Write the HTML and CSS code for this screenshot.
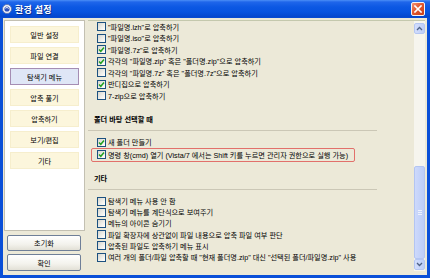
FILE: index.html
```html
<!DOCTYPE html>
<html lang="ko">
<head>
<meta charset="utf-8">
<title>환경 설정</title>
<link rel="stylesheet" href="styles.css">
</head>
<body>
<div class="window">
  <div class="titlebar">
    <span class="app-icon"><svg width="10" height="10" viewBox="0 0 10 10"><circle cx="5" cy="5" r="4.5" fill="#f4f6fb" stroke="#5a6ea8" stroke-width="0.8"/><circle cx="5" cy="5" r="2.6" fill="#2d4fb8"/><path d="M3.2 4.2 Q5 2.6 6.8 4.4" stroke="#fff" stroke-width="0.9" fill="none"/></svg></span>
    <span class="title">환경 설정</span>
    <span class="close"><svg width="8" height="8" viewBox="0 0 8 8"><path d="M1 1 L7 7 M7 1 L1 7" stroke="#fff" stroke-width="1.6" stroke-linecap="square"/></svg></span>
  </div>
  <div class="frame">
    <div class="sidebar">
      <div class="nav">
        <div class="nav-btn">일반 설정</div>
        <div class="nav-btn">파일 연결</div>
        <div class="nav-btn active">탐색기 메뉴</div>
        <div class="nav-btn">압축 풀기</div>
        <div class="nav-btn">압축하기</div>
        <div class="nav-btn">보기/편집</div>
        <div class="nav-btn">기타</div>
      </div>
      <div class="push first">초기화</div>
      <div class="push">확인</div>
    </div>
    <div class="pane">
      <div class="content">
        <div class="list first-list">
          <div class="opt"><span class="cb"></span>"파일명.lzh"로 압축하기</div>
          <div class="opt"><span class="cb"></span>"파일명.iso"로 압축하기</div>
          <div class="opt"><span class="cb on"><svg width="7" height="7" viewBox="0 0 7 7"><path d="M1 3.5 L2.8 5.3 L6 1.6" stroke="#21a121" stroke-width="1.5" fill="none"/></svg></span>"파일명.7z"로 압축하기</div>
          <div class="opt"><span class="cb on"><svg width="7" height="7" viewBox="0 0 7 7"><path d="M1 3.5 L2.8 5.3 L6 1.6" stroke="#21a121" stroke-width="1.5" fill="none"/></svg></span>각각의 "파일명.zip" 혹은 "폴더명.zip"으로 압축하기</div>
          <div class="opt"><span class="cb"></span>각각의 "파일명.7z" 혹은 "폴더명.7z"으로 압축하기</div>
          <div class="opt"><span class="cb on"><svg width="7" height="7" viewBox="0 0 7 7"><path d="M1 3.5 L2.8 5.3 L6 1.6" stroke="#21a121" stroke-width="1.5" fill="none"/></svg></span>반디집으로 압축하기</div>
          <div class="opt"><span class="cb"></span>7-zip으로 압축하기</div>
        </div>
        <div class="heading">폴더 바탕 선택할 때</div>
        <div class="sep"></div>
        <div class="list">
          <div class="opt"><span class="cb on"><svg width="7" height="7" viewBox="0 0 7 7"><path d="M1 3.5 L2.8 5.3 L6 1.6" stroke="#21a121" stroke-width="1.5" fill="none"/></svg></span>새 폴더 만들기</div>
          <div class="hl">
            <div class="opt"><span class="cb on"><svg width="7" height="7" viewBox="0 0 7 7"><path d="M1 3.5 L2.8 5.3 L6 1.6" stroke="#21a121" stroke-width="1.5" fill="none"/></svg></span>명령 창(cmd) 열기 (Vista/7 에서는 Shift 키를 누르면 관리자 권한으로 실행 가능)</div>
          </div>
        </div>
        <div class="heading second">기타</div>
        <div class="sep"></div>
        <div class="list etc">
          <div class="opt"><span class="cb"></span>탐색기 메뉴 사용 안 함</div>
          <div class="opt"><span class="cb"></span>탐색기 메뉴를 계단식으로 보여주기</div>
          <div class="opt"><span class="cb"></span>메뉴의 아이콘 숨기기</div>
          <div class="opt"><span class="cb"></span>파일 확장자에 상관없이 파일 내용으로 압축 파일 여부 판단</div>
          <div class="opt"><span class="cb"></span>압축된 파일도 압축하기 메뉴 표시</div>
          <div class="opt"><span class="cb"></span>여러 개의 폴더/파일 압축할 때 "현재 폴더명.zip" 대신 "선택된 폴더/파일명.zip" 사용</div>
        </div>
      </div>
      <div class="scrollbar">
        <div class="sb-btn"><svg width="7" height="5" viewBox="0 0 7 5"><path d="M1 4 L3.5 1.5 L6 4" stroke="#4d6185" stroke-width="1.3" fill="none"/></svg></div>
        <div class="sb-track"><div class="sb-thumb"><span class="grip"></span></div></div>
        <div class="sb-btn"><svg width="7" height="5" viewBox="0 0 7 5"><path d="M1 1 L3.5 3.5 L6 1" stroke="#4d6185" stroke-width="1.3" fill="none"/></svg></div>
      </div>
    </div>
  </div>
</div>
</body>
</html>
```

FILE: styles.css
```css
html, body {
  margin: 0;
  padding: 0;
}
body {
  width: 430px;
  height: 278px;
  overflow: hidden;
  font-family: "Liberation Sans", "Noto Sans CJK KR", sans-serif;
  font-size: 7.2px;
  color: #000;
}
.window {
  width: 430px;
  height: 278px;
  display: flex;
  flex-direction: column;
  background: #0a4fd8;
}
.titlebar {
  height: 18px;
  flex: none;
  display: flex;
  align-items: center;
  padding: 0 5px 0 2px;
  background: linear-gradient(to bottom, #4b8ff7 0, #1f66ea 2px, #0c58e3 7px, #0753df 12px, #0446cc 17px, #0a4fd8 18px);
}
.app-icon {
  width: 10px;
  height: 10px;
  display: flex;
  margin-right: 3px;
}
.title {
  flex: 1;
  color: #fff;
  font-weight: bold;
  font-size: 9px;
  letter-spacing: 0.2px;
  text-shadow: 1px 1px 0 #0b2f8f;
}
.close {
  width: 14px;
  height: 14px;
  box-sizing: border-box;
  display: flex;
  align-items: center;
  justify-content: center;
  border: 1px solid #f4f4f4;
  border-radius: 2px;
  background: linear-gradient(135deg, #f19276 0%, #e3582f 45%, #c8401a 100%);
}
.frame {
  flex: 1;
  margin: 0 3px 3px;
  background: #ece9d8;
  display: flex;
  padding: 2px 0 4px 1px;
  min-height: 0;
}
.sidebar {
  width: 81px;
  display: flex;
  flex-direction: column;
}
.nav {
  flex: 1;
  background: #fff;
  border: 1px solid #c3c0b2;
  padding: 5px 5px;
  display: flex;
  flex-direction: column;
  gap: 4px;
}
.nav-btn {
  width: 69px;
  height: 17px;
  box-sizing: border-box;
  display: flex;
  align-items: center;
  justify-content: center;
  background: #fcf6dc;
  border: 1px solid #f6eecd;
  font-size: 7.2px;
}
.nav-btn.active {
  background: #dfe6f6;
  border: 1px solid #a58db3;
}
.push {
  margin: 3px 0 0 3px;
  width: 74px;
  height: 17px;
  box-sizing: border-box;
  display: flex;
  align-items: center;
  justify-content: center;
  border: 1px solid #6f7f98;
  border-radius: 2px;
  background: linear-gradient(to bottom, #ffffff 0%, #f3f2ec 60%, #e2e0d6 100%);
}
.push.first {
  margin-top: 4px;
  height: 16px;
}
.pane {
  flex: 1;
  margin: 0 2px 0 3px;
  border-top: 1px solid #c4c8ad;
  display: flex;
  min-width: 0;
}
.content {
  flex: 1;
  overflow: hidden;
}
.list {
  padding-left: 9px;
}
.opt {
  height: 11.5px;
  display: flex;
  align-items: center;
  white-space: nowrap;
}
.etc .opt {
  height: 11.2px;
}
.cb {
  width: 7px;
  height: 7px;
  flex: none;
  border: 1px solid #1c5180;
  background: linear-gradient(135deg, #d6d6cf 0%, #f4f4f0 70%, #ffffff 100%);
  margin-right: 2px;
  display: flex;
}
.heading {
  margin-top: 12px;
  padding-left: 6px;
  height: 11px;
  line-height: 11px;
  font-weight: bold;
}
.heading.second {
  margin-top: 11px;
}
.sep {
  width: 289px;
  height: 1px;
  background: #cbc7b6;
  margin: 5px 0 6px;
}
.hl {
  margin-left: -6px;
  width: 257px;
  padding-left: 5px;
  border: 1px solid #e2706b;
  border-radius: 2px;
}
.scrollbar {
  width: 11px;
  flex: none;
  display: flex;
  flex-direction: column;
  padding: 2px 0 1px;
  background: #f6f5ee;
}
.sb-btn {
  height: 11px;
  flex: none;
  box-sizing: border-box;
  display: flex;
  align-items: center;
  justify-content: center;
  background: linear-gradient(to right, #d3defc, #bccdf8);
  border: 1px solid #b4c6f3;
  border-radius: 2px;
}
.sb-track {
  flex: 1;
  display: flex;
  flex-direction: column;
  justify-content: flex-end;
}
.sb-thumb {
  height: 93px;
  box-sizing: border-box;
  background: linear-gradient(to right, #cdd9fb, #bccdf8);
  border: 1px solid #b3c5f2;
  border-radius: 2px;
  display: flex;
  align-items: center;
  justify-content: center;
}
.grip {
  width: 4px;
  height: 5px;
  background: repeating-linear-gradient(to bottom, #eef2fe 0 1px, transparent 1px 2px);
}
```
